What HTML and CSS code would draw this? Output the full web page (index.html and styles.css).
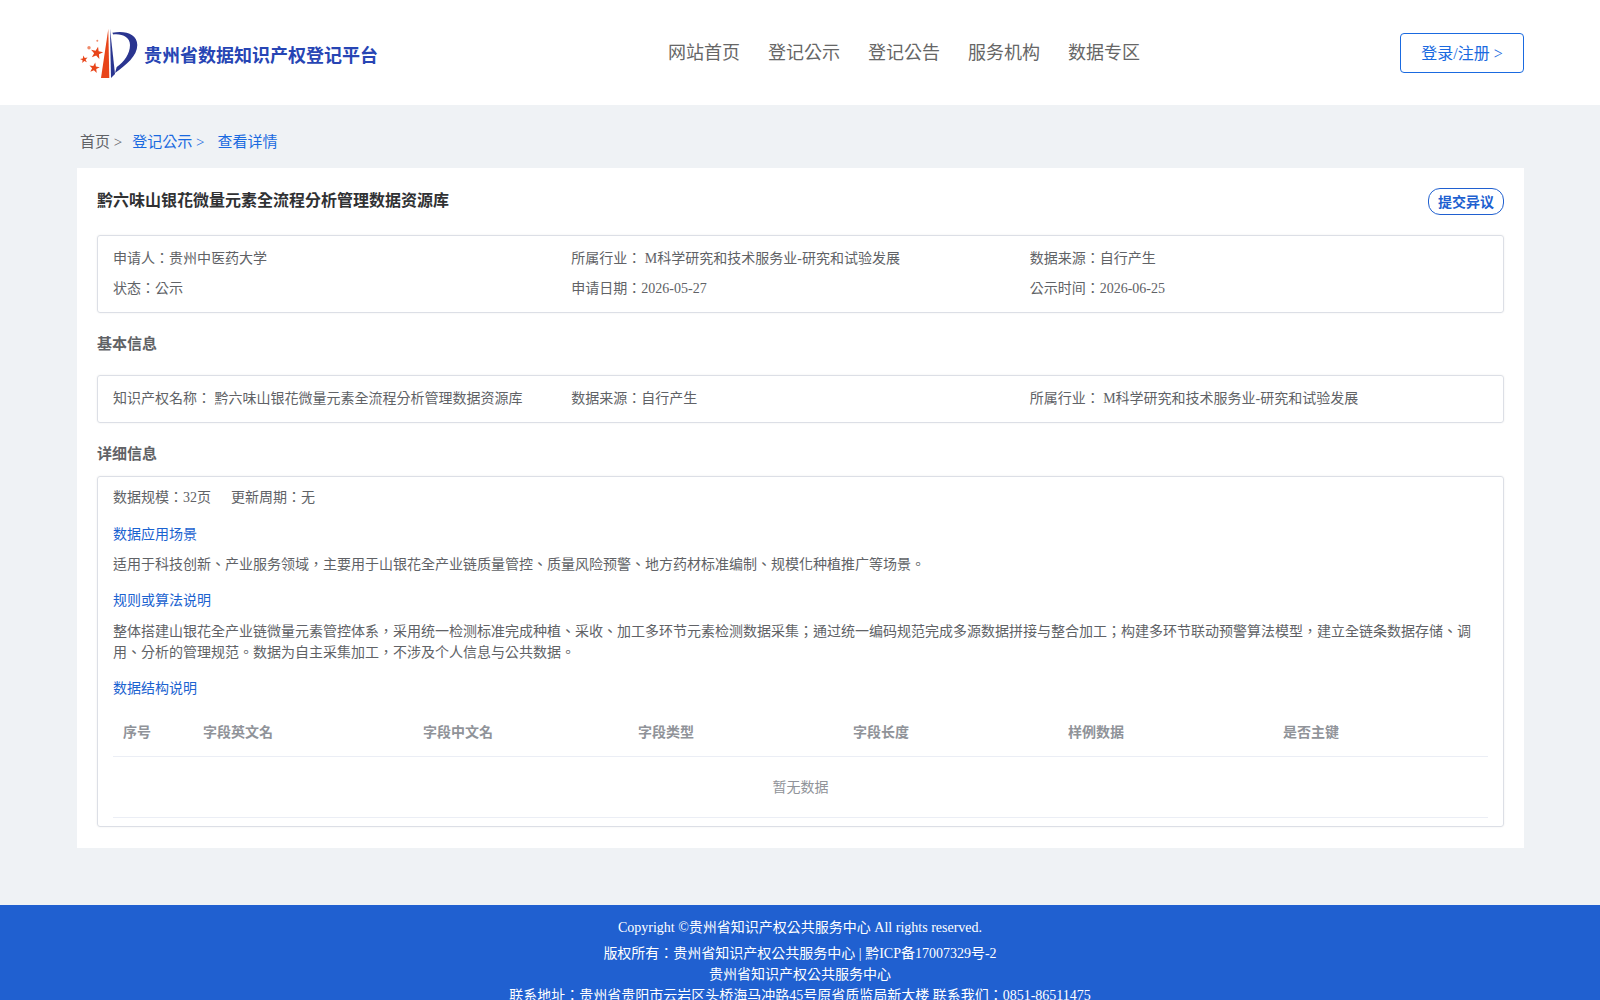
FILE: index.html
```html
<!DOCTYPE html>
<html>
<head>
    <meta charset="UTF-8">
    <title>贵州省数据知识产权登记平台</title>
    <link rel="stylesheet" href="styles.css">
</head>
<body>

    <!-- Header -->
    <header class="header">
        <a class="brand" href="#">
            <svg class="brand-logo" viewBox="0 0 58 52" width="58" height="52" aria-hidden="true">
                <defs>
                    <polygon id="star" points="0,-1 .24,-.31 .95,-.31 .38,.12 .59,.81 0,.4 -.59,.81 -.38,.12 -.95,-.31 -.24,-.31"/>
                </defs>
                <path d="M28.300 2 L29.300 51 L21 51 Z" fill="#e8451a"/>
                <path d="M30 2 L35 47 L31 51 Z" fill="#2a3590"/>
                <path d="M32.300 5.700 C45 3 57.300 7 57.300 18 C57.300 29 46 38 35 46 L36.700 40 C44 35 50 27 50 18 C50 10 42 6.500 33.300 7.500 Z" fill="#2a3590"/>
                <g fill="#e8451a">
                    <use href="#star" transform="translate(16.700 26) rotate(12) scale(6.500)"/>
                    <use href="#star" transform="translate(4 32.500) rotate(-10) scale(4)"/>
                    <use href="#star" transform="translate(14.300 41) rotate(10) scale(5.500)"/>
                    <circle cx="9" cy="20.700" r="1.700" fill="#ef8a6a"/>
                    <circle cx="17.300" cy="13.700" r="1" fill="#ef8a6a"/>
                </g>
            </svg>
            <span class="brand-name">贵州省数据知识产权登记平台</span>
        </a>
        <nav class="nav">
            <a href="#">网站首页</a>
            <a href="#">登记公示</a>
            <a href="#">登记公告</a>
            <a href="#">服务机构</a>
            <a href="#">数据专区</a>
        </nav>
        <a class="login-btn" href="#">登录/注册 &gt;</a>
    </header>

    <main class="main">
        <!-- Breadcrumb -->
        <div class="crumbs">
            <span>首页 &gt;</span>
            <a href="#">登记公示 &gt;</a>
            <a class="crumb-last" href="#">查看详情</a>
        </div>

        <section class="card">
            <div class="card-top">
                <h1>黔六味山银花微量元素全流程分析管理数据资源库</h1>
                <button class="objection">提交异议</button>
            </div>

            <div class="box info-grid">
                <div>申请人：贵州中医药大学</div>
                <div>所属行业： M科学研究和技术服务业-研究和试验发展</div>
                <div>数据来源：自行产生</div>
                <div>状态：公示</div>
                <div>申请日期：2026-05-27</div>
                <div>公示时间：2026-06-25</div>
            </div>

            <h2 class="section-title title-basic">基本信息</h2>
            <div class="box info-grid basic-grid">
                <div>知识产权名称： 黔六味山银花微量元素全流程分析管理数据资源库</div>
                <div>数据来源：自行产生</div>
                <div>所属行业： M科学研究和技术服务业-研究和试验发展</div>
            </div>

            <h2 class="section-title title-detail">详细信息</h2>
            <div class="box detail">
                <div class="scale">
                    <span>数据规模：32页</span>
                    <span>更新周期：无</span>
                </div>

                <h3>数据应用场景</h3>
                <p>适用于科技创新、产业服务领域，主要用于山银花全产业链质量管控、质量风险预警、地方药材标准编制、规模化种植推广等场景。</p>

                <h3>规则或算法说明</h3>
                <p>整体搭建山银花全产业链微量元素管控体系，采用统一检测标准完成种植、采收、加工多环节元素检测数据采集；通过统一编码规范完成多源数据拼接与整合加工；构建多环节联动预警算法模型，建立全链条数据存储、调用、分析的管理规范。数据为自主采集加工，不涉及个人信息与公共数据。</p>

                <h3>数据结构说明</h3>
                <table class="fields">
                    <thead>
                        <tr>
                            <th class="col-no">序号</th>
                            <th class="col-en">字段英文名</th>
                            <th>字段中文名</th>
                            <th>字段类型</th>
                            <th>字段长度</th>
                            <th>样例数据</th>
                            <th>是否主键</th>
                        </tr>
                    </thead>
                    <tbody>
                        <tr>
                            <td class="empty" colspan="7">暂无数据</td>
                        </tr>
                    </tbody>
                </table>
            </div>
        </section>
    </main>

    <!-- Footer -->
    <footer class="footer">
        <p class="copyright">Copyright ©贵州省知识产权公共服务中心 All rights reserved.</p>
        <p>版权所有：贵州省知识产权公共服务中心 | 黔ICP备17007329号-2</p>
        <p>贵州省知识产权公共服务中心</p>
        <p>联系地址：贵州省贵阳市云岩区头桥海马冲路45号原省质监局新大楼 联系我们：0851-86511475</p>
    </footer>

</body>
</html>
```

FILE: styles.css
```css
html, body {
    margin: 0;
    padding: 0;
}

body {
    background-color: #eff2f5;
    color: #606266;
    font-family: "Liberation Serif", "Noto Sans CJK TC", serif;
    font-size: 14px;
}

a {
    color: inherit;
    text-decoration: none;
}

/* Header */
.header {
    display: flex;
    align-items: flex-start;
    height: 105px;
    padding: 0 76px 0 80px;
    background-color: #fff;
}

.brand {
    display: flex;
    align-items: center;
    width: 588px;
    margin-top: 27px;
}

.brand-logo {
    flex: none;
    margin-right: 6px;
}

.brand-name {
    padding-top: 2px;
    color: #2745b4;
    font-size: 18px;
    font-weight: bold;
}

.nav {
    display: flex;
    gap: 28px;
    margin-top: 41px;
    font-size: 18px;
    line-height: 24px;
    color: #666;
}

.login-btn {
    margin-left: auto;
    margin-top: 33px;
    width: 122px;
    height: 38px;
    border: 1px solid #1a6ae0;
    border-radius: 4px;
    color: #1a6ae0;
    font-size: 16px;
    line-height: 40px;
    text-align: center;
}

/* Main */
.main {
    padding: 0 76px 57px 77px;
}

.crumbs {
    display: flex;
    height: 63px;
    padding-left: 3px;
    line-height: 75px;
    font-size: 15px;
}

.crumbs a {
    margin-left: 10px;
    color: #1a6ae0;
}

.crumbs .crumb-last {
    margin-left: 13px;
}

.card {
    height: 680px;
    box-sizing: border-box;
    padding: 20px;
    background-color: #fff;
}

.card-top {
    display: flex;
    justify-content: space-between;
    align-items: flex-start;
    height: 47px;
}

.card-top h1 {
    margin: 2px 0 0;
    color: #303133;
    font-size: 16px;
    line-height: 22px;
}

.objection {
    width: 76px;
    height: 27px;
    padding: 0 0 2px;
    border: 1px solid #2060d0;
    border-radius: 12px;
    background-color: #fff;
    color: #2060d0;
    font: inherit;
    font-weight: bold;
}

.box {
    border: 1px solid #dcdfe6;
    border-radius: 3px;
    box-shadow: 0 0 2px rgba(0, 0, 0, 0.08);
}

.info-grid {
    display: grid;
    grid-template-columns: repeat(3, 1fr);
    gap: 9px 0;
    padding: 12px 15px 13px;
    line-height: 21px;
}

.info-grid > div {
    height: 21px;
}

.basic-grid {
    padding: 12px 15px 13px;
}

.section-title {
    margin: 0;
    color: #606266;
    font-size: 15px;
    line-height: 20px;
}

.title-basic {
    margin-top: 21px;
    margin-bottom: 21px;
}

.title-detail {
    margin-top: 21px;
    margin-bottom: 12px;
}

/* Detail box */
.detail {
    height: 351px;
    box-sizing: border-box;
    padding: 0 15px;
}

.scale {
    display: flex;
    gap: 20px;
    padding-top: 10px;
    line-height: 21px;
}

.detail h3 {
    margin: 15px 0 0;
    color: #1a62d0;
    font-size: 14px;
    font-weight: normal;
    line-height: 21px;
}

.scale + h3 {
    margin-top: 16px;
}

.detail p {
    margin: 10px 0 0;
    line-height: 21px;
}

.scale + h3 + p {
    margin-top: 9px;
}

.fields {
    width: 100%;
    margin-top: 9px;
    border-collapse: collapse;
    table-layout: fixed;
}

.fields th {
    height: 45px;
    padding: 0 10px 3px;
    border-bottom: 1px solid #ebeef5;
    color: #909399;
    text-align: left;
    font-weight: bold;
}

.fields .col-no {
    width: 60px;
}

.fields .col-en {
    width: 200px;
}

.empty {
    height: 57px;
    padding: 0 0 3px;
    border-bottom: 1px solid #ebeef5;
    color: #909399;
    text-align: center;
}

/* Footer */
.footer {
    padding: 12px 0 16px;
    background-color: #2060d0;
    color: #fff;
    text-align: center;
    line-height: 21px;
}

.footer p {
    margin: 0;
}

.footer .copyright {
    margin-bottom: 5px;
}
```
